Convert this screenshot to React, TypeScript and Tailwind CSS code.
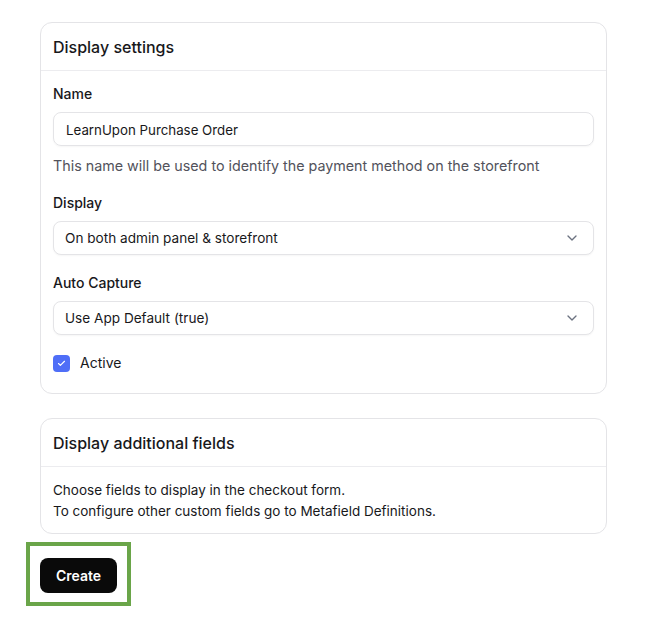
import { ChevronDown, Check } from "lucide-react";

const font = { fontFamily: "Inter, 'Noto Sans', sans-serif" };

const SelectBox = ({ value }: { value: string }) => (
  <div className="flex h-[34px] items-center justify-between rounded-lg border border-[#e4e4e7] bg-white pl-[11px] pr-[13px] text-[13.6px] text-[#18181b] shadow-[0_1px_2px_rgba(0,0,0,0.04)]">
    <span>{value}</span>
    <ChevronDown className="h-4 w-4 text-[#6b7280]" strokeWidth={2} />
  </div>
);

const App = () => {
  return (
    <div className="min-h-screen bg-white px-10 pt-[22px] text-[#18181b]" style={font}>
      {/* Display settings card */}
      <div className="w-[567px] rounded-xl border border-[#e4e4e7] bg-white">
        <div className="flex h-[48px] items-center border-b border-[#ececef] px-3 text-base font-medium">
          Display settings
        </div>
        <div className="flex flex-col px-3 pt-[13px] pb-[20px]">
          <label className="text-sm font-medium leading-5">Name</label>
          <div className="mt-2 flex h-[34px] items-center rounded-lg border border-[#e4e4e7] px-[12px] pt-[3px] text-[13.3px] shadow-[0_1px_2px_rgba(0,0,0,0.04)]">
            LearnUpon Purchase Order
          </div>
          <p className="mt-[10px] text-[14.3px] leading-5 text-[#52525b]">
            This name will be used to identify the payment method on the storefront
          </p>

          <label className="mt-[17px] text-sm font-medium leading-5">Display</label>
          <div className="mt-2">
            <SelectBox value="On both admin panel & storefront" />
          </div>

          <label className="mt-[18px] text-sm font-medium leading-5">Auto Capture</label>
          <div className="mt-2">
            <SelectBox value="Use App Default (true)" />
          </div>

          <div className="mt-[18px] flex items-center gap-[10px]">
            <span className="flex h-[17px] w-[17px] items-center justify-center rounded-[4px] bg-[#4f6ef7]">
              <Check className="h-[9px] w-[9px] text-white" strokeWidth={3} />
            </span>
            <span className="text-sm leading-5">Active</span>
          </div>
        </div>
      </div>

      {/* Additional fields card */}
      <div className="mt-[24px] w-[567px] rounded-xl border border-[#e4e4e7] bg-white">
        <div className="flex h-[48px] items-center border-b border-[#ececef] px-3 pt-px text-base font-medium">
          Display additional fields
        </div>
        <div className="px-3 pt-[13px] pb-[11px] text-[13.5px] leading-[21px]">
          <p>Choose fields to display in the checkout form.</p>
          <p>To configure other custom fields go to Metafield Definitions.</p>
        </div>
      </div>

      <div className="-ml-[14px] mt-[8px] inline-flex border-4 border-[#6aa549] px-[10px] pt-3 pb-[9px]">
        <button className="h-[35px] rounded-lg bg-[#0a0a0a] px-4 text-sm font-semibold text-white">
          Create
        </button>
      </div>
    </div>
  );
};

export default App;
